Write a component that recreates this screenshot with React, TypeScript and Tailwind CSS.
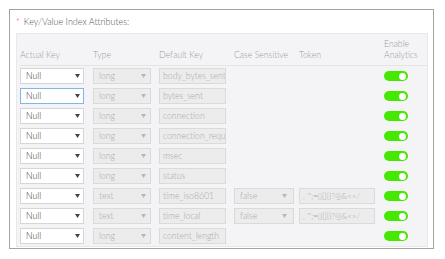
const rows = [
  { type: "long", key: "body_bytes_sent" },
  { type: "long", key: "bytes_sent", focus: true },
  { type: "long", key: "connection" },
  { type: "long", key: "connection_requests" },
  { type: "long", key: "msec" },
  { type: "long", key: "status" },
  { type: "text", key: "time_iso8601", token: true },
  { type: "text", key: "time_local", token: true },
  { type: "long", key: "content_length" },
];

function Arrow({ muted }: { muted?: boolean }) {
  return (
    <svg width="5" height="4" viewBox="0 0 5 4" className="shrink-0">
      <path d="M0 0 L5 0 L2.5 4 Z" fill={muted ? "#b8b8b8" : "#444"} />
    </svg>
  );
}

function Toggle() {
  return (
    <div className="flex h-[10px] w-[24px] items-center justify-end rounded-full bg-[#44e800] pr-[2px]">
      <div className="h-[7px] w-[7px] rounded-full bg-white" />
    </div>
  );
}

export default function App() {
  const cols = "grid grid-cols-[73px_66px_75px_65px_85px_40px] items-center";
  return (
    <div className="h-[259px] w-[445px] bg-white p-[9px] font-['Lato',sans-serif] text-[8.7px] font-light">
      <div className="flex h-[240px] w-[425px] flex-col overflow-hidden border border-[#a3a3a3]">
        <div className="flex h-[23px] shrink-0 items-center pl-[6px] text-[9px] text-[#555]">
          <span className="mr-[4px] text-[#e53935]">*</span>
          Key/Value Index Attributes:
        </div>
        <div className="ml-[6px] mr-[5px] border border-[#e8e8ea] bg-[#f4f4f6] pl-[3px]">
          <div className={`${cols} h-[32px] items-end border-b border-[#e4e4e6] pb-[5px] leading-[11px] text-[#9a9a9a]`}>
            <span>Actual Key</span>
            <span>Type</span>
            <span>Default Key</span>
            <span>Case Sensitive</span>
            <span>Token</span>
            <span>
              Enable
              <br />
              Analytics
            </span>
          </div>
          {rows.map((r, i) => (
            <div key={i} className={`${cols} h-[20px]`}>
              <div
                className={`flex h-[16px] w-[64px] items-center justify-between border bg-white pl-[5px] pr-[3px] text-[#333] ${
                  r.focus ? "border-[#7fb8e8]" : "border-[#d6d6d6]"
                }`}
              >
                <span>Null</span>
                <Arrow />
              </div>
              <div className="flex h-[16px] w-[58px] items-center justify-between border border-[#dadada] bg-[#ececec] pl-[5px] pr-[4px] text-[#a8a8a8]">
                <span>{r.type}</span>
                <Arrow muted />
              </div>
              <div className="flex h-[16px] w-[67px] items-center overflow-hidden whitespace-nowrap border border-[#dadada] bg-[#ececec] pl-[3px] text-[#a8a8a8]">
                {r.key}
              </div>
              {r.token ? (
                <div className="flex h-[16px] w-[60px] items-center justify-between border border-[#dadada] bg-[#ececec] pl-[5px] pr-[6px] text-[#a8a8a8]">
                  <span>false</span>
                  <Arrow muted />
                </div>
              ) : (
                <div />
              )}
              {r.token ? (
                <div className="flex h-[16px] w-[76px] items-center overflow-hidden whitespace-nowrap border border-[#dadada] bg-[#ececec] pl-[3px] text-[8px] text-[#a8a8a8]">
                  {", '\";=()[]{}?@&<>/"}
                </div>
              ) : (
                <div />
              )}
              <Toggle />
            </div>
          ))}
        </div>
      </div>
    </div>
  );
}
